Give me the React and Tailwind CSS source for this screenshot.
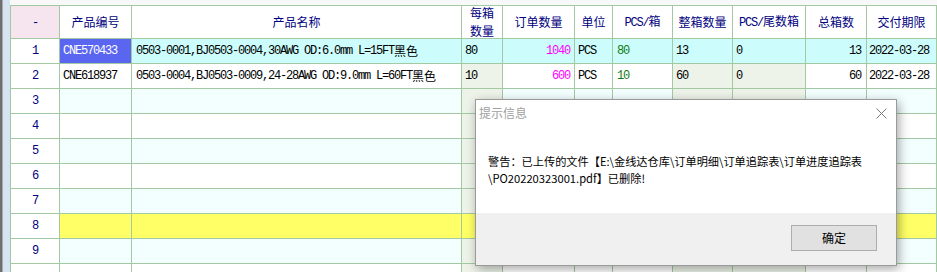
import React from "react";

function T({ s }) {
  const parts = s.split(/([\x00-\x7f]+)/).filter((p) => p !== "");
  return (
    <>
      {parts.map((p, i) =>
        /^[\x00-\x7f]+$/.test(p) ? (
          <span key={i} className="font-['Liberation_Mono',monospace] tracking-[-1.2px]">
            {p}
          </span>
        ) : (
          <span key={i} className="font-['Noto_Sans_CJK_SC',sans-serif] tracking-normal">
            {p}
          </span>
        )
      )}
    </>
  );
}

const headers = ["-", "产品编号", "产品名称", "每箱\n数量", "订单数量", "单位", "PCS/箱", "整箱数量", "PCS/尾数箱", "总箱数", "交付期限"];

const data = [
  ["1", "CNE570433", "0503-0001,BJ0503-0004,30AWG OD:6.0mm L=15FT黑色", "80", "1040", "PCS", "80", "13", "0", "13", "2022-03-28"],
  ["2", "CNE618937", "0503-0004,BJ0503-0009,24-28AWG OD:9.0mm L=60FT黑色", "10", "600", "PCS", "10", "60", "0", "60", "2022-03-28"],
];

const greenCols = [3, 7, 8];

function cellBg(r, c) {
  if (c === 0) return "bg-white";
  if (r === 0) return c === 1 ? "bg-[#5a66f0]" : "bg-[#ccfcfc]";
  if (r === 7) return "bg-[#ffff66]";
  if (greenCols.includes(c)) return "bg-[#edf3e9]";
  if (r === 1) return "bg-white";
  return r % 2 === 0 ? "bg-[#f3fefe]" : "bg-white";
}

function textCls(r, c) {
  if (c === 0) return "justify-center text-[#000080]";
  if (r === 0 && c === 1) return "justify-start pl-[3px] text-white";
  if (c === 4) return "justify-end pr-[4px] text-[#ff00ff]";
  if (c === 9) return "justify-end pr-[5px] text-black";
  if (c === 6) return "justify-start pl-[4px] text-[#107c10]";
  if (c === 10) return "justify-start pl-[2px] text-black";
  if (c === 2) return "justify-start pl-[4px] text-black";
  return "justify-start pl-[3px] text-black";
}

export default function App() {
  const rows = [];
  for (let r = 0; r < 10; r++) {
    rows.push(r < 2 ? data[r] : [r < 9 ? String(r + 1) : "", "", "", "", "", "", "", "", "", "", ""]);
  }
  return (
    <div className="relative w-[937px] h-[272px] overflow-hidden bg-[#f8f8f8] flex text-[12px]">
      <div className="w-[2px] h-full bg-[#6e6e6e]" />
      <div className="w-[1px] h-full bg-[#a8a8a8]" />
      <div className="w-[7px] h-full bg-[#d6e3f1]" />
      <div className="flex flex-col pt-[5px]">
        <div className="grid grid-cols-[49px_72px_330px_41px_72px_38px_60px_60px_73px_61px_70px] border-l border-t border-[#a3c9a3]">
          {headers.map((h, c) => (
            <div
              key={"h" + c}
              className={`h-[33px] border-r border-b border-[#a3c9a3] flex items-center justify-center text-center text-[#000080] leading-[15px] whitespace-pre ${
                c === 0 ? "bg-[#f6e5ee]" : "bg-white"
              }`}
            >
              <span>
                <T s={h} />
              </span>
            </div>
          ))}
          {rows.map((row, r) =>
            row.map((v, c) => (
              <div
                key={r + "-" + c}
                className={`h-[25px] border-r border-b border-[#a3c9a3] flex items-center whitespace-nowrap overflow-hidden ${cellBg(r, c)} ${textCls(r, c)}`}
              >
                <T s={v} />
              </div>
            ))
          )}
        </div>
      </div>

      <div className="absolute left-[475px] top-[99px] w-[422px] h-[167px] border border-[#9a9a9a] bg-white shadow-[2px_3px_10px_rgba(0,0,0,0.35)] flex flex-col font-['Noto_Sans_CJK_SC',sans-serif]">
        <div className="h-[113px] flex flex-col">
          <div className="h-[22px] flex items-center justify-between pl-[3px] pr-[9px] pt-[3px]">
            <span className="text-[12px] text-[#a0a0a0]">提示信息</span>
            <svg width="11" height="11" viewBox="0 0 11 11" className="mt-[1px]">
              <path d="M0.5 0.5 L10.5 10.5 M10.5 0.5 L0.5 10.5" stroke="#7a7a7a" strokeWidth="1" fill="none" />
            </svg>
          </div>
          <div className="pl-[12px] pt-[31px] text-[11.2px] leading-[17px] text-black">
            警告：已上传的文件【E:\金线达仓库\订单明细\订单追踪表\订单进度追踪表
            <br />
            \PO20220323001.pdf】已删除!
          </div>
        </div>
        <div className="flex-1 bg-[#f0f0f0] flex justify-end items-start pt-[12px] pr-[19px]">
          <button className="w-[86px] h-[26px] bg-[#e1e1e1] border border-[#adadad] text-[12px] text-black flex items-center justify-center">
            确定
          </button>
        </div>
      </div>
    </div>
  );
}
